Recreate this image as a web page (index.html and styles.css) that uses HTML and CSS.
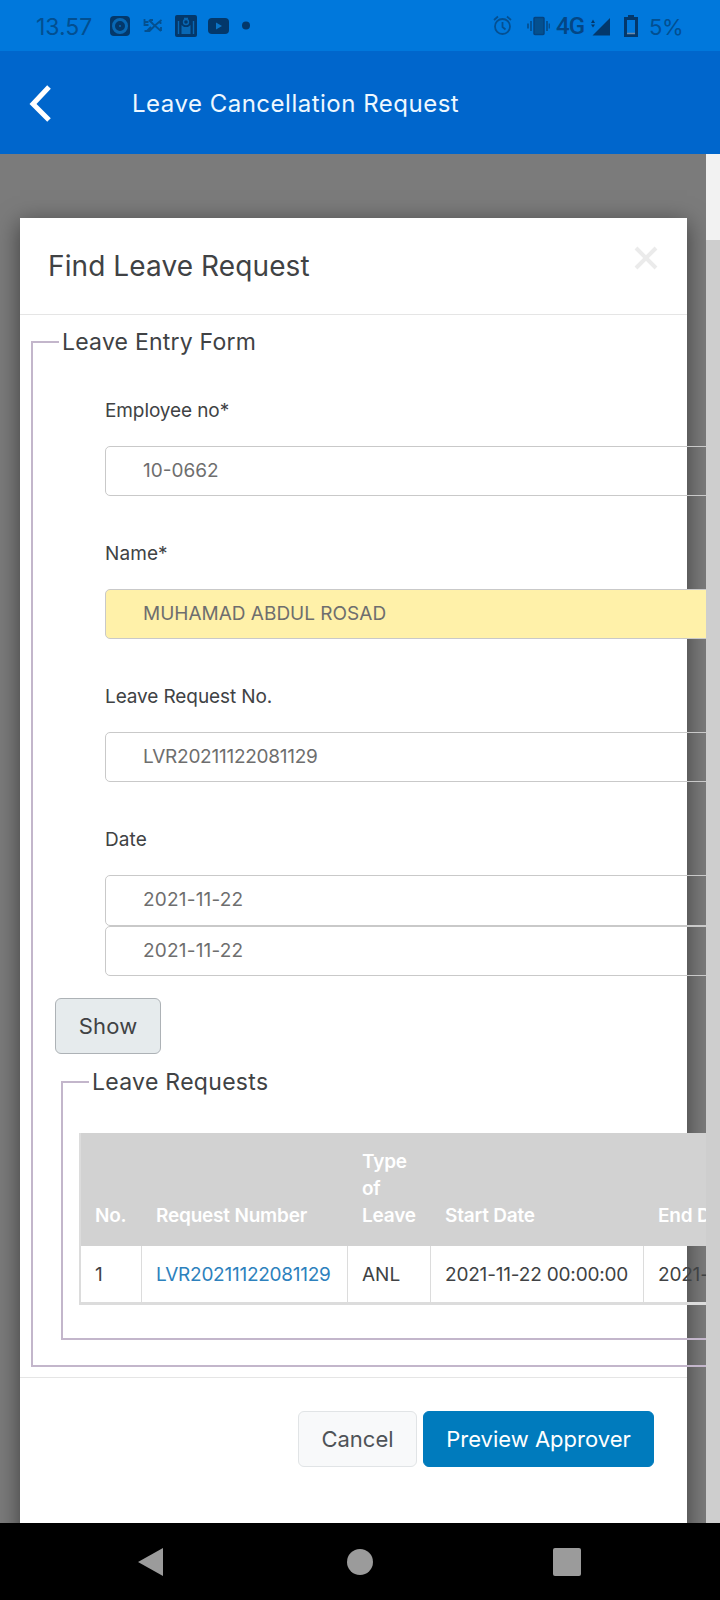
FILE: index.html
```
<!DOCTYPE html>
<html lang="en">
<head>
<meta charset="utf-8">
<title>Leave Cancellation Request</title>
<link rel="stylesheet" href="styles.css">
</head>
<body>
<div class="status">
  <span class="clock">13.57</span>
  <svg width="142" height="24" viewBox="0 0 142 24">
    <rect x="0" y="2" width="20" height="20" rx="4"/>
    <circle class="ring" cx="10" cy="12" r="6.500"/>
    <circle class="hole" cx="10" cy="12" r="1"/>
    <path class="thin" d="M34.500 5v6h4M34.500 8h4M34.500 17h5l6-6 6-5M39 6l4 4 8 7M43 6h-3M50.500 6v4M51 17v-4M41 13l-4 4"/>
    <rect x="65" y="1" width="22" height="22" rx="2"/>
    <path class="cut" d="M68.500 7v13M83.500 7v13M74 4.500h4"/>
    <path class="cut-fill" d="M71.500 20v-9l2.500 2h4l2.500-2v9z"/>
    <circle class="cut" cx="76" cy="8" r="2.500"/>
    <rect x="98" y="4" width="21" height="16" rx="4"/>
    <path class="play" d="M106 8.500v7l6-3.500z"/>
    <circle cx="136" cy="11.500" r="4"/>
  </svg>
  <div class="status-right">
    <svg width="58" height="24" viewBox="0 0 58 24">
      <circle class="alarm" cx="10.500" cy="12.500" r="7.500"/>
      <path class="alarm" d="M10.500 8v5l3 2.500M2 6l4-3.500M19 6l-4-3.500"/>
      <rect class="vib" x="42" y="3.500" width="10" height="17" rx="1"/>
      <path class="alarm" d="M39 7v10M36 9.500v5M55 7v10M57.500 9.500v5"/>
    </svg>
    <span class="net">4G</span>
    <svg width="48" height="24" viewBox="0 0 48 24">
      <path d="M20 4v17.500H2.500z"/><path d="M1 9l2-3.500 2 3.500zM1 10.500l2 3 2-3z"/>
      <path class="batt" d="M35.500 4.500h11v17h-11zM38 2.500h6"/>
      <path class="low" d="M37 19.500h8"/>
    </svg>
    <span class="pct">5%</span>
  </div>
</div>
<div class="appbar">
  <svg class="back" width="24" height="40" viewBox="0 0 24 40"><path d="M20 3L4 20l16 16"/></svg>
  <h1 class="apptitle">Leave Cancellation Request</h1>
</div>
<div class="viewport">
  <div class="backdrop">
    <div class="modal">
      <div class="modal-head">
        <h2 class="title">Find Leave Request</h2>
        <svg class="close" width="24" height="24" viewBox="0 0 24 24"><path d="M2 2l20 20M22 2L2 22"/></svg>
      </div>
      <div class="modal-body">
        <div class="group outer">
          <div class="legend">Leave Entry Form</div>
          <div class="field"><label class="label">Employee no*</label><div class="input">10-0662</div></div>
          <div class="field"><label class="label name">Name*</label><div class="input filled">MUHAMAD ABDUL ROSAD</div></div>
          <div class="field"><label class="label">Leave Request No.</label><div class="input code">LVR20211122081129</div></div>
          <div class="field"><label class="label date">Date</label><div class="input day first">2021-11-22</div><div class="input day">2021-11-22</div></div>
          <div class="btn show">Show</div>
          <div class="group inner">
            <div class="legend wide">Leave Requests</div>
            <table class="table">
              <thead><tr><th class="c1">No.</th><th class="c2">Request Number</th><th class="c3">Type of Leave</th><th class="c4">Start Date</th><th class="c5">End Date</th></tr></thead>
              <tbody><tr><td>1</td><td class="code link">LVR20211122081129</td><td>ANL</td><td class="time">2021-11-22 00:00:00</td><td class="time">2021-11-22 00:00:00</td></tr></tbody>
            </table>
          </div>
        </div>
      </div>
      <div class="modal-foot">
        <div class="btn cancel">Cancel</div>
        <div class="btn primary">Preview Approver</div>
      </div>
    </div>
  </div>
  <div class="scroll"><div class="thumb"></div></div>
</div>
<div class="nav">
  <svg width="26" height="30" viewBox="0 0 26 30"><path d="M26 1v28L1 15z"/></svg>
  <svg width="26" height="26" viewBox="0 0 26 26"><circle cx="13" cy="13" r="13"/></svg>
  <svg width="28" height="28" viewBox="0 0 28 28"><rect width="28" height="28" rx="2"/></svg>
</div>
</body>
</html>
```
FILE: styles.css
```
* { box-sizing: border-box; }
body { margin: 0; width: 720px; height: 1600px; overflow: hidden; background: #000; color: #404244; font-family: Inter, "Liberation Sans", sans-serif; font-weight: 400; }
h1, h2 { margin: 0; font-weight: inherit; }
svg { display: block; flex: none; }

.status { display: flex; align-items: center; height: 51px; padding: 1px 36px 0; background: #0078dc; color: #024f91; }
.clock { width: 74px; font-size: 23px; line-height: 50px; padding-top: 2px; }
.status svg { fill: #03386b; }
.status .ring { fill: none; stroke: #0868b5; stroke-width: 3; }
.status .hole, .status .cut-fill { fill: #0868b5; }
.status .thin { fill: none; stroke: #04508f; stroke-width: 1.8; }
.status .cut { fill: none; stroke: #0868b5; stroke-width: 1.4; }
.status .play { fill: #0b75c8; }
.status .alarm { fill: none; stroke: #045092; stroke-width: 1.8; }
.status .vib { fill: #04508f; stroke: #044380; stroke-width: 1.5; }
.status .batt { fill: none; stroke: #03386b; stroke-width: 3; }
.status .low { fill: none; stroke: #6f8ba8; stroke-width: 1.5; }
.status-right { display: flex; align-items: center; margin-left: auto; }
.net { margin-left: 6px; margin-right: 7px; width: 27px; font: 500 24px/50px Roboto, sans-serif; letter-spacing: -1px; color: #034685; }
.pct { width: 35px; margin-left: 11px; font-size: 22px; line-height: 50px; padding-top: 2px; letter-spacing: -.45px; }

.appbar { display: flex; align-items: center; height: 103px; padding: 2px 0 0 29px; background: #0066cc; color: #eef8ff; }
.back { fill: none; stroke: #fff; stroke-width: 5; }
.apptitle { margin-left: 79px; font-size: 24px; line-height: 50px; padding-top: 1px; letter-spacing: .5px; }

.viewport { display: flex; height: 1369px; }
.backdrop { width: 706px; height: 1369px; padding: 64px 0 0 20px; overflow: hidden; background: #7b7b7b; }
.modal { width: 667px; height: 1400px; background: #fff; box-shadow: 0 5px 22px rgba(0, 0, 0, .5); }
.scroll { width: 14px; padding-top: 86px; background: #f2f2f2; }
.thumb { height: 1283px; background: #cecece; }

.modal-head { display: flex; justify-content: space-between; height: 97px; padding: 28px 29px 0 28px; border-bottom: 1px solid #e5e5e5; }
.title { font-size: 28px; line-height: 40px; letter-spacing: .1px; }
.close { fill: none; stroke: #ebebeb; stroke-width: 4; }
.modal-body { height: 1063px; padding: 26px 0 0 11px; border-bottom: 1px solid #e5e5e5; }

/* The frames start with a short rule and stay open beside the caption. */
.group { display: flow-root; border: 2px solid #c3b6cb; border-right: 0; border-top: 0; }
.outer { width: 900px; height: 1026px; }
.legend { display: flex; align-items: center; height: 40px; margin-top: -19px; font-size: 23px; line-height: 40px; letter-spacing: .22px; }
.legend::before { content: ""; width: 26px; height: 2px; margin: 0 3px 0 0; background: #c3b6cb; }
.wide { letter-spacing: .3px; }
.field { height: 143px; padding-left: 72px; }
.outer > .field:nth-of-type(2) { margin-top: 33px; }
.label { display: block; height: 51px; font-size: 19px; line-height: 32px; letter-spacing: -.1px; }
.name { letter-spacing: .1px; }
.date { letter-spacing: .1px; }
.input { width: 800px; height: 50px; padding-left: 37px; border: 1px solid #c9c9c9; border-radius: 5px; font-size: 19px; line-height: 48px; color: #6e6e6e; }
.first { height: 51px; }
.day { letter-spacing: .2px; }
.code { letter-spacing: -.25px; }
.filled { background: #fff1a9; }
.btn { display: flex; align-items: center; justify-content: center; height: 56px; border: 1px solid; border-radius: 6px; font-size: 22px; }
.show { width: 106px; margin: 31px 0 27px 22px; background: #e6ebed; border-color: #adb2b6; letter-spacing: .2px; }
.inner { width: 860px; height: 259px; margin-left: 28px; }

.table { width: 800px; margin: 31px 0 0 16px; table-layout: fixed; border-collapse: separate; border-spacing: 0; border-left: 2px solid #dcdcdc; font-size: 19px; line-height: 27px; }
.table th { height: 113px; padding: 0 15px 17px 14px; vertical-align: bottom; text-align: left; font-weight: 600; letter-spacing: -.2px; color: #fff; background: #d2d2d2; }
.table td { height: 59px; padding: 2px 0 2px 14px; border-right: 1px solid #dcdcdc; border-bottom: 3px solid #dcdcdc; white-space: nowrap; }
.table .link { color: #2d81bd; }
.table .time { letter-spacing: -.18px; }
.c1 { width: 61px; } .c2 { width: 206px; } .c3 { width: 83px; } .c4 { width: 213px; }

.modal-foot { display: flex; justify-content: flex-end; gap: 6px; padding: 33px 33px 0 0; }
.cancel { width: 119px; background: #f8f9fa; border-color: #e1e4e6; color: #4f5357; }
.primary { width: 231px; background: #007bbd; border-color: #007bbd; color: #fff; }

.nav { display: flex; align-items: center; height: 77px; padding-left: 137px; background: #000; }
.nav svg { fill: #9b9b9b; }
.nav svg:nth-child(2) { margin-left: 184px; }
.nav svg:nth-child(3) { margin-left: 180px; }
```
